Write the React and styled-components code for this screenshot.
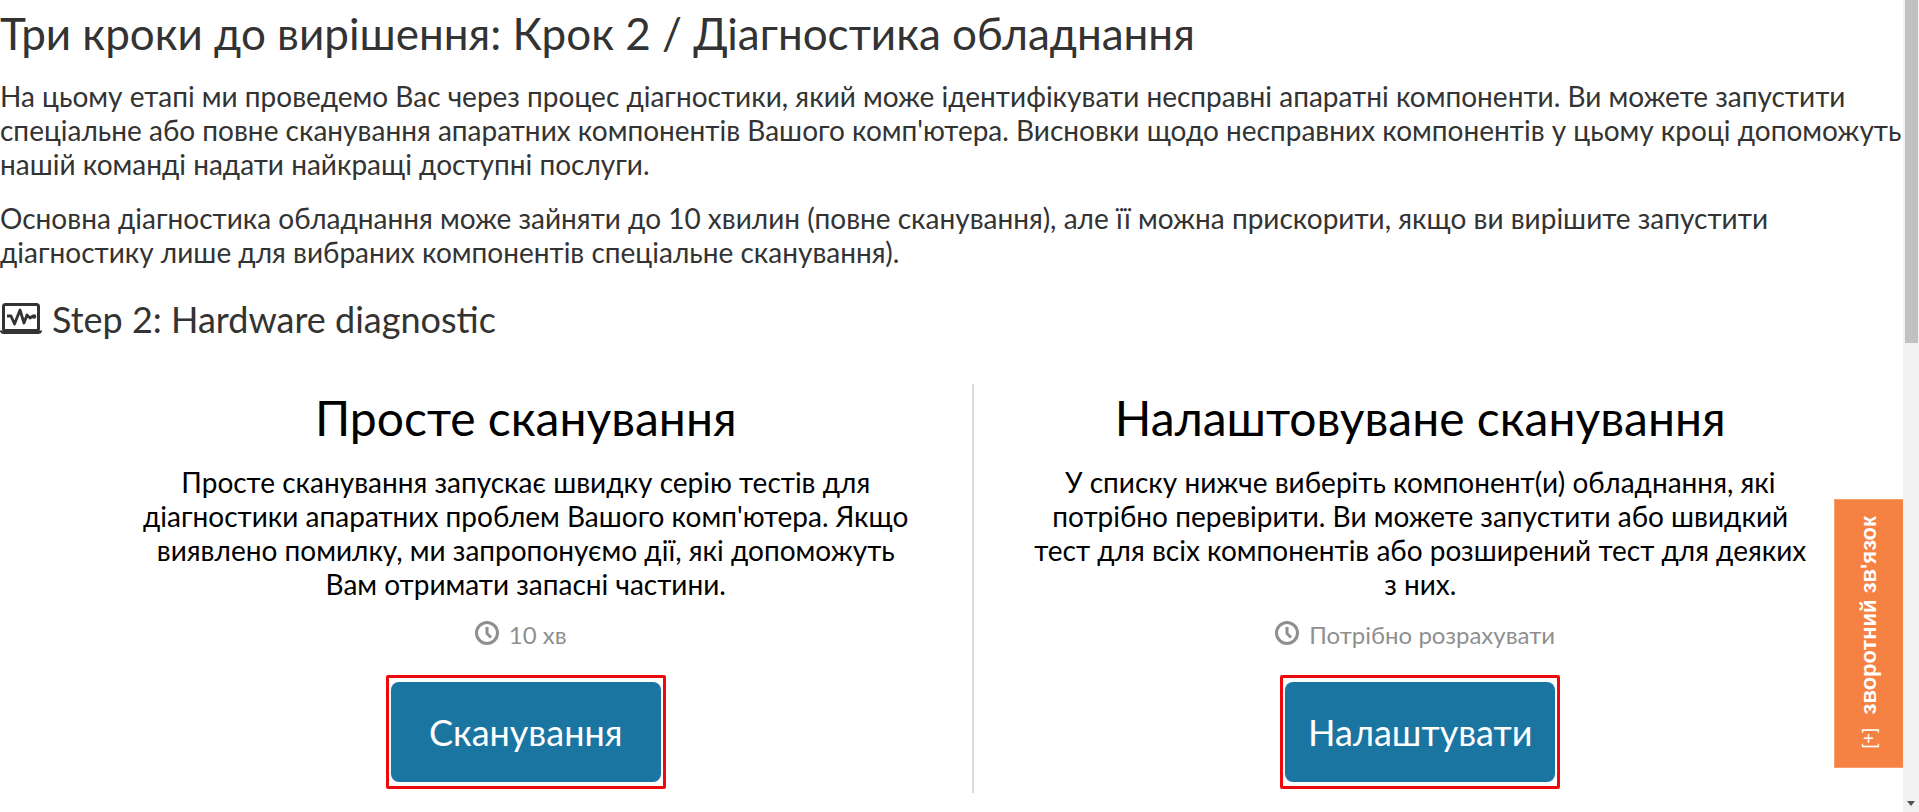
import React from "react";
import styled, { createGlobalStyle } from "styled-components";

const GlobalStyle = createGlobalStyle`
  *, *::before, *::after { box-sizing: border-box; }
  body {
    margin: 0;
    background: #fff;
    color: #333;
    font-family: Lato, "Open Sans", sans-serif;
    font-size: 28px;
    line-height: 34px;
  }
`;

const Shell = styled.div`
  display: flex;
  height: 100vh;
  overflow: hidden;
`;

const Page = styled.main`
  flex: 1;
  min-width: 0;
`;

const Title = styled.h1`
  margin: 0;
  padding: 7px 0 20px;
  font-size: 44px;
  font-weight: 400;
  line-height: 52px;
`;

const Intro = styled.p`
  margin: 0 0 20px;
`;

const StepTitle = styled.h2`
  display: flex;
  align-items: center;
  gap: 10px;
  margin: 0;
  padding: 8px 0 43px;
  font-size: 36px;
  font-weight: 400;
  line-height: 44px;
`;

const Choices = styled.div`
  display: grid;
  grid-template-columns: 1fr 1fr;
  padding: 0 36px 0 80px;
`;

const Choice = styled.section`
  display: flex;
  flex-direction: column;
  align-items: center;
  padding: 4px 56px;
  color: #000;
  text-align: center;

  &:first-child {
    border-right: 2px solid #ddd;
  }
`;

const ChoiceTitle = styled.h3`
  margin: 0 0 17px;
  font-size: 48px;
  font-weight: 400;
  line-height: 60px;
`;

const ChoiceText = styled.p`
  margin: 0 0 16px;
`;

const Duration = styled.div`
  display: flex;
  align-items: center;
  gap: 10px;
  padding-right: 10px;
  color: #8f8f8f;
  font-size: 24px;
  line-height: 36px;

  svg {
    margin-bottom: 4px;
  }
`;

const Marked = styled.div`
  margin-top: 22px;
  padding: 4px 2px;
  border: 3px solid #ee0a0a;
  border-radius: 2px;
`;

const Action = styled.button`
  display: block;
  width: 270px;
  height: 100px;
  border: 0;
  border-radius: 8px;
  background: #1b75a1;
  color: #fff;
  font: inherit;
  font-size: 36px;
  cursor: pointer;
`;

const Feedback = styled.button`
  position: fixed;
  right: 16px;
  bottom: 44px;
  display: flex;
  align-items: center;
  justify-content: flex-start;
  gap: 14px;
  width: 69px;
  height: 269px;
  padding: 18px 0;
  border: 1px solid #f8a06c;
  border-right: 0;
  background: #f58142;
  color: #fff;
  font-family: Arial, "Liberation Sans", sans-serif;
  font-size: 18px;
  line-height: 24px;
  white-space: nowrap;
  writing-mode: sideways-lr;
  cursor: pointer;
`;

const FeedbackLabel = styled.span`
  font-size: 22px;
  font-weight: 700;
`;

const ScrollTrack = styled.div`
  display: flex;
  flex-direction: column;
  justify-content: space-between;
  align-items: center;
  width: 16px;
  padding-bottom: 6px;
  background: #f1f1f1;
`;

const ScrollThumb = styled.div`
  width: 13px;
  height: 343px;
  background: #c1c1c1;
`;

const LaptopIcon = () => (
  <svg width="42" height="32" viewBox="0 0 42 32" fill="none" stroke="#333" aria-hidden="true">
    <rect x="3.500" y="1.500" width="35" height="26" rx="2" strokeWidth="3" />
    <path d="M0 27.500H42V28.500Q41 31 38 31H4Q1 31 0 28.500Z" fill="#333" stroke="none" />
    <path d="M7 13h4l3.500 8 5.500-14 4 13 3-8 3 3 3-2" strokeWidth="2.800" strokeLinejoin="round" />
    <circle cx="34" cy="13.500" r="2.300" fill="#333" stroke="none" />
  </svg>
);

const ClockIcon = () => (
  <svg width="24" height="24" viewBox="0 0 24 24" fill="none" stroke="currentColor" aria-hidden="true">
    <circle cx="12" cy="12" r="10.500" strokeWidth="3" />
    <path d="M12 6v6.500l4 4" strokeWidth="3" />
  </svg>
);

const ArrowDown = () => (
  <svg width="8" height="5" viewBox="0 0 8 5" aria-hidden="true">
    <path d="M0 0h8L4 5z" fill="#505050" />
  </svg>
);

const choices = [
  {
    title: "Просте сканування",
    text: "Просте сканування запускає швидку серію тестів для діагностики апаратних проблем Вашого комп'ютера. Якщо виявлено помилку, ми запропонуємо дії, які допоможуть Вам отримати запасні частини.",
    duration: "10 хв",
    action: "Сканування",
  },
  {
    title: "Налаштовуване сканування",
    text: "У списку нижче виберіть компонент(и) обладнання, які потрібно перевірити. Ви можете запустити або швидкий тест для всіх компонентів або розширений тест для деяких з них.",
    duration: "Потрібно розрахувати",
    action: "Налаштувати",
  },
];

export default function App() {
  return (
    <Shell>
      <GlobalStyle />
      <Page>
        <Title>Три кроки до вирішення: Крок 2 / Діагностика обладнання</Title>
        <Intro>
          На цьому етапі ми проведемо Вас через процес діагностики, який може ідентифікувати несправні апаратні
          компоненти. Ви можете запустити спеціальне або повне сканування апаратних компонентів Вашого комп'ютера.
          Висновки щодо несправних компонентів у цьому кроці допоможуть нашій команді надати найкращі доступні послуги.
        </Intro>
        <Intro>
          Основна діагностика обладнання може зайняти до 10 хвилин (повне сканування), але її можна прискорити, якщо ви
          вирішите запустити діагностику лише для вибраних компонентів спеціальне сканування).
        </Intro>
        <StepTitle>
          <LaptopIcon />
          Step 2: Hardware diagnostic
        </StepTitle>
        <Choices>
          {choices.map((c) => (
            <Choice key={c.title}>
              <ChoiceTitle>{c.title}</ChoiceTitle>
              <ChoiceText>{c.text}</ChoiceText>
              <Duration>
                <ClockIcon />
                {c.duration}
              </Duration>
              <Marked>
                <Action type="button">{c.action}</Action>
              </Marked>
            </Choice>
          ))}
        </Choices>
      </Page>
      <Feedback type="button">
        <span>[+]</span>
        <FeedbackLabel>зворотний зв'язок</FeedbackLabel>
      </Feedback>
      <ScrollTrack aria-hidden="true">
        <ScrollThumb />
        <ArrowDown />
      </ScrollTrack>
    </Shell>
  );
}
